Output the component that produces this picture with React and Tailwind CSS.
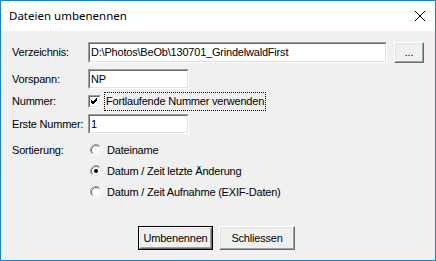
import React from 'react';

const Sunken = ({ className = '', children }) => (
    <div className={`border border-t-[#a0a0a0] border-l-[#a0a0a0] border-b-white border-r-white ${className}`}>
        <div className="h-full border border-t-[#696969] border-l-[#696969] border-b-[#e3e3e3] border-r-[#e3e3e3] bg-white flex items-center pl-[1px] text-black leading-none whitespace-nowrap overflow-hidden">
            {children}
        </div>
    </div>
);

const Raised = ({ className = '', children, isDefault }) => {
    const inner = (
        <div className="h-full border border-t-white border-l-white border-b-[#696969] border-r-[#696969]">
            <div className="h-full border border-t-[#e3e3e3] border-l-[#e3e3e3] border-b-[#a0a0a0] border-r-[#a0a0a0] bg-[#f0f0f0] flex items-center justify-center text-black whitespace-nowrap">
                {children}
            </div>
        </div>
    );
    if (isDefault) {
        return <div className={`border border-black ${className}`}>{inner}</div>;
    }
    return <div className={className}>{inner}</div>;
};

const Radio = ({ checked }) => (
    <svg width="12" height="12" viewBox="0 0 12 12" className="shrink-0">
        <circle cx="6" cy="6" r="5" fill="#fff" />
        <path d="M2.11 9.89 A5.5 5.5 0 0 1 9.89 2.11" stroke="#a0a0a0" fill="none" />
        <path d="M9.89 2.11 A5.5 5.5 0 0 1 2.11 9.89" stroke="#ffffff" fill="none" />
        <path d="M2.82 9.18 A4.5 4.5 0 0 1 9.18 2.82" stroke="#696969" fill="none" />
        <path d="M9.18 2.82 A4.5 4.5 0 0 1 2.82 9.18" stroke="#e3e3e3" fill="none" />
        {checked && <circle cx="6" cy="6" r="2" fill="#000" />}
    </svg>
);

const Checkbox = () => (
    <div className="w-[13px] h-[13px] border border-t-[#a0a0a0] border-l-[#a0a0a0] border-b-white border-r-white shrink-0">
        <div className="w-full h-full border border-t-[#696969] border-l-[#696969] border-b-[#e3e3e3] border-r-[#e3e3e3] bg-white">
            <svg width="9" height="9" viewBox="0 0 9 9">
                <path d="M1 4 L3 6 L7 2 M1 5 L3 7 L7 3 M1 3 L3 5 L7 1" stroke="#000" strokeWidth="1" fill="none" />
            </svg>
        </div>
    </div>
);

export default function App() {
    const font = { fontFamily: '"Liberation Sans", Arial, sans-serif' };
    return (
        <div className="w-[436px] h-[261px] border border-[#1883d7] flex flex-col bg-[#f0f0f0] overflow-hidden" style={font}>
            {/* Title bar */}
            <div className="h-[30px] bg-white flex items-center justify-between pl-[8px] pr-[10px] shrink-0">
                <span className="text-[11.5px] text-black" style={{ fontFamily: '"Noto Sans", "Open Sans", sans-serif' }}>
                    Dateien umbenennen
                </span>
                <svg width="10" height="10" viewBox="0 0 10 10">
                    <path d="M0 0 L10 10 M10 0 L0 10" stroke="#000" strokeWidth="1" />
                </svg>
            </div>

            {/* Body */}
            <div className="flex-1 flex flex-col pl-[11px] pt-[11px] text-[11px] tracking-[-0.2px] text-black whitespace-nowrap">
                <div className="flex items-center h-[21px]">
                    <span className="w-[76px]">Verzeichnis:</span>
                    <Sunken className="w-[299px] h-[21px]">D:\Photos\BeOb\130701_GrindelwaldFirst</Sunken>
                    <Raised className="ml-[7px] w-[30px] h-[21px]">...</Raised>
                </div>

                <div className="flex items-center h-[20px] mt-[6px]">
                    <span className="w-[76px]">Vorspann:</span>
                    <Sunken className="w-[101px] h-[20px]">NP</Sunken>
                </div>

                <div className="flex items-center h-[19px] mt-[3px]">
                    <span className="w-[76px]">Nummer:</span>
                    <Checkbox />
                    <span className="ml-[3px] border border-dotted border-black h-[19px] px-[1px] flex items-center">
                        Fortlaufende Nummer verwenden
                    </span>
                </div>

                <div className="flex items-center h-[20px] mt-[3px]">
                    <span className="w-[76px]">Erste Nummer:</span>
                    <Sunken className="w-[101px] h-[20px]">1</Sunken>
                </div>

                <div className="flex mt-[9px]">
                    <span className="w-[78px] leading-[14px]">Sortierung:</span>
                    <div className="flex flex-col gap-[7px]">
                        <label className="flex items-center gap-[5px] h-[14px]">
                            <Radio />
                            <span>Dateiname</span>
                        </label>
                        <label className="flex items-center gap-[5px] h-[14px]">
                            <Radio checked />
                            <span>Datum / Zeit letzte Änderung</span>
                        </label>
                        <label className="flex items-center gap-[5px] h-[14px]">
                            <Radio />
                            <span>Datum / Zeit Aufnahme (EXIF-Daten)</span>
                        </label>
                    </div>
                </div>

                <div className="flex mt-[27px] ml-[126px] gap-[6px]">
                    <Raised isDefault className="w-[75px] h-[24px]">Umbenennen</Raised>
                    <Raised className="w-[76px] h-[24px]">Schliessen</Raised>
                </div>
            </div>
        </div>
    );
}
